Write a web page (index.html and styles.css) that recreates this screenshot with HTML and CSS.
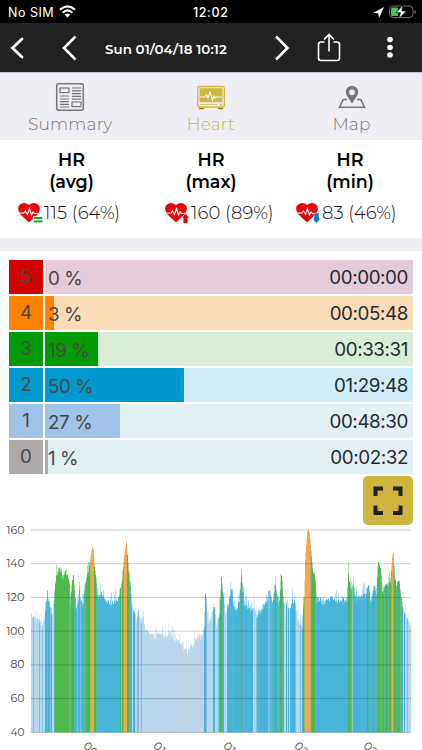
FILE: index.html
```html
<!DOCTYPE html>
<html lang="en">
<head>
<meta charset="utf-8">
<title>Heart rate</title>
<link rel="stylesheet" href="styles.css">
</head>
<body>
<div class="status">
  <span class="carrier">No SIM</span>
  <svg class="wifi" width="17" height="13" viewBox="0 0 17 13"><g fill="none" stroke="#fff" stroke-width="2.200"><path d="M1 4.600Q8.500-2 16 4.600"/><path d="M3.700 7.700Q8.500 3.200 13.300 7.700"/></g><path d="M5.700 9.600Q8.500 7.200 11.300 9.600L8.500 12.500z" fill="#fff"/></svg>
  <span class="clock">12:02</span>
  <svg class="battery" width="46" height="16" viewBox="0 0 46 16"><path d="M1 9L12 3 7 14 6.300 9.200z" fill="#fff"/><rect x="17.500" y="2" width="23.500" height="11.500" rx="3.500" fill="none" stroke="#777"/><path d="M19 5q0-1.500 1.500-1.500H26V12h-5.500Q19 12 19 10.500z" fill="#35c759"/><path d="M42.500 6v4q1.500-.5 1.500-2t-1.500-2z" fill="#777"/><path d="M31 1L24 8.700h4.500L26.500 15 34.500 7H29.800z" fill="#fff" stroke="#000" stroke-width=".7"/></svg>
</div>
<div class="nav">
  <svg class="back" width="15" height="24" viewBox="0 0 15 24"><path d="M13 3L3.500 12 13 21" fill="none" stroke="#fff" stroke-width="2.800" stroke-linecap="round"/></svg>
  <svg class="prev" width="17" height="28" viewBox="0 0 17 28"><path d="M14.500 2.500L3 14 14.500 25.500" fill="none" stroke="#fff" stroke-width="2.500"/></svg>
  <span class="date">Sun 01/04/18 10:12</span>
  <svg class="next" width="17" height="28" viewBox="0 0 17 28"><path d="M2 2.500L13.500 14 2 25.500" fill="none" stroke="#fff" stroke-width="2.500"/></svg>
  <svg class="share" width="24" height="30" viewBox="0 0 24 30"><path d="M7.500 9H4Q1.500 9 1.500 11.500V25Q1.500 27.500 4 27.500H20Q22.500 27.500 22.500 25V11.500Q22.500 9 20 9H16.500M12 18.500V2M7 6.500L12 1.500 17 6.500" fill="none" stroke="#fff" stroke-width="1.600"/></svg>
  <svg class="more" width="8" height="24" viewBox="0 0 8 24"><g fill="#fff"><circle cx="4" cy="3.500" r="2.800"/><circle cx="4" cy="11.500" r="2.800"/><circle cx="4" cy="19" r="2.800"/></g></svg>
</div>
<div class="tabs">
  <div class="tab"><svg width="30" height="30" viewBox="0 0 30 30"><g fill="none" stroke="#777" stroke-width="1.200"><rect x="1.700" y="1.700" width="26.600" height="26.600" rx="1.500" stroke-width="1.500"/><rect x="5" y="6" width="9" height="4.600"/><rect x="17" y="20" width="9" height="4.600"/><path d="M17 6h9M17 8.800h9M17 11.600h9M5 14h9M17 14.400h9M5 17h9M17 17.200h9M5 19.700h9M5 22.300h9M5 25h9"/></g></svg><span>Summary</span></div>
  <div class="tab active"><svg width="30" height="30" viewBox="0 0 30 30"><rect x="1.700" y="4.500" width="26.600" height="20.500" rx="1.500" fill="#efeef5" stroke="#d2b53e" stroke-width="1.300"/><rect x="3.500" y="6.200" width="23" height="14" fill="#d2b53e"/><path d="M4 15h5l1.500-2 1.500 3 2-6 2.500 8 1.500-4 1 2 1.500-1H26" fill="none" stroke="#fff" stroke-width="1.100"/><path d="M4 22.500h17M3 26h5v1H3zM22 26h5v1h-5z" stroke="#d2b53e" stroke-width=".8"/><circle cx="25" cy="22.500" r="1" fill="#d2b53e"/></svg><span>Heart</span></div>
  <div class="tab"><svg width="30" height="30" viewBox="0 0 30 30"><path d="M10 17.500H6.300L2.500 25.200H27.500L23.700 17.500H20" fill="none" stroke="#777" stroke-width="1.600"/><path fill-rule="evenodd" d="M15 21.500L10.300 14.300A6.300 6.300 0 1 1 19.700 14.300zM15 7.300a3 3 0 1 0 .01 0z" fill="#777"/></svg><span>Map</span></div>
</div>
<div class="stats">
  <div class="stat s1"><b>HR<br>(avg)</b><div><svg class="hr" width="25" height="22" viewBox="0 0 25 22"><path class="heart" d="M11 20.500L2 12Q-1.500 6 1.500 3Q6-1 11 3Q16-1 20.500 3Q23.500 6 20 12z"/><path class="pulse" d="M1 11h5l1.500-2 2 3.500 2-6 2 6.500 1.500-3 1.500 1.500H21"/><path d="M15 14h9.500v7.500H15z" fill="#fff"/><path d="M16 16h8.500M16 19.500h8.500" stroke="#22a12e" stroke-width="2"/></svg><span>115 (64%)</span></div></div>
  <div class="stat s2"><b>HR<br>(max)</b><div><svg class="hr" width="25" height="22" viewBox="0 0 25 22"><path class="heart" d="M11 20.500L2 12Q-1.500 6 1.500 3Q6-1 11 3Q16-1 20.500 3Q23.500 6 20 12z"/><path class="pulse" d="M1 11h5l1.500-2 2 3.500 2-6 2 6.500 1.500-3 1.500 1.500H21"/><path d="M20.500 11L24.500 16H22.900V21.500H18.100V16H16.500z" fill="#e9000b" stroke="#fff" stroke-width=".7"/></svg><span>160 (89%)</span></div></div>
  <div class="stat s3"><b>HR<br>(min)</b><div><svg class="hr" width="25" height="22" viewBox="0 0 25 22"><path class="heart" d="M11 20.500L2 12Q-1.500 6 1.500 3Q6-1 11 3Q16-1 20.500 3Q23.500 6 20 12z"/><path class="pulse" d="M1 11h5l1.500-2 2 3.500 2-6 2 6.500 1.500-3 1.500 1.500H21"/><path d="M20.500 21.500L24.500 16.500H23V11H18V16.500H16.500z" fill="#0875c9" stroke="#fff" stroke-width=".5"/></svg><span>83 (46%)</span></div></div>
</div>
<div class="strip"></div>
<div class="zones">
  <div class="zone z5"><i>5</i><div class="track"><div class="fill"></div><span>0 %</span><em>00:00:00</em></div></div>
  <div class="zone z4"><i>4</i><div class="track"><div class="fill"></div><span>3 %</span><em>00:05:48</em></div></div>
  <div class="zone z3"><i>3</i><div class="track"><div class="fill"></div><span>19 %</span><em>00:33:31</em></div></div>
  <div class="zone z2"><i>2</i><div class="track"><div class="fill"></div><span>50 %</span><em>01:29:48</em></div></div>
  <div class="zone z1"><i>1</i><div class="track"><div class="fill"></div><span>27 %</span><em>00:48:30</em></div></div>
  <div class="zone z0"><i>0</i><div class="track"><div class="fill"></div><span>1 %</span><em>00:02:32</em></div></div>
</div>
<div class="expand"><svg width="50" height="49" viewBox="0 0 50 49"><path d="M20 12.500H12.500V20M30 12.500H37.500V20M20 37H12.500V29.500M30 37H37.500V29.500" fill="none" stroke="#222" stroke-width="4"/></svg></div>
<svg class="chart" id="chart" width="422" height="225" viewBox="0 525 422 225"></svg>
<script src="chart.js"></script>
</body>
</html>
```
FILE: styles.css
```css
* { box-sizing: border-box; }
body { margin: 0; width: 422px; height: 750px; overflow: hidden; background: #fff; font-family: Montserrat, sans-serif; color: #111; }
svg { display: block; flex: none; }
.status { height: 23px; background: #000; color: #fff; display: flex; align-items: center; padding-left: 8px; font: 400 12.500px/23px Inter, sans-serif; }
.carrier { width: 51px; letter-spacing: .5px; white-space: nowrap; padding-top: 1px; }
.clock { margin-left: 117px; width: 43px; font-weight: 500; letter-spacing: .6px; padding-top: 1px; }
.battery { margin-left: 136px; }
.nav { height: 49px; background: #222; color: #fff; display: flex; align-items: center; padding-left: 9px; }
.prev { margin-left: 37px; }
.date { margin-left: 27px; width: 123px; font-size: 13.400px; font-weight: 600; letter-spacing: .05px; white-space: nowrap; padding-top: 2px; }
.next { margin-left: 46px; }
.share { margin-left: 26px; }
.more { margin-left: 45px; }
.tabs { height: 68px; background: #efeef5; border-top: 1px solid #c8c5ce; display: grid; grid-template-columns: 140.500px 140.500px 141px; }
.tab { display: flex; flex-direction: column; align-items: center; padding-top: 9px; font-size: 17px; line-height: 22px; font-weight: 300; color: #777; }
.tab span { letter-spacing: .15px; margin-top: 1px; }
.tab.active { color: #d2b53e; }
.stats { height: 98px; display: flex; padding: 9px 0 0; }
.stat { width: 139px; text-align: center; }
.stat b { display: block; font-weight: 600; font-size: 17.500px; line-height: 22px; color: #000; }
.stat > div { display: flex; align-items: center; margin-top: 8px; height: 23px; font-size: 18px; font-weight: 300; letter-spacing: .1px; white-space: nowrap; }
.s1 { padding-left: 4px; }
.s1 > div { margin-left: 14px; }
.s2 > b, .s3 > b { padding-left: 5px; }
.s2 > div { margin-left: 26px; }
.s3 > div { margin-left: 18px; }
.hr { margin-right: 1px; }
.heart { fill: #f0000b; }
.pulse { fill: none; stroke: #fff; stroke-width: 1.100; }
.strip { height: 13px; background: #efeef5; }
.zones { padding: 9px 9px 0; display: grid; gap: 2px; font-family: Inter, sans-serif; font-size: 18.800px; line-height: 35px; color: #484848; }
.zone { display: grid; grid-template: 34px / 34px 368px; gap: 2px; }
.zone i { font-style: normal; text-align: center; background: var(--c); line-height: 34px; }
.track { background: var(--bg); display: grid; grid-template: 34px / 1fr 1fr; letter-spacing: -.4px; }
.track > * { grid-row: 1; }
.fill { grid-column: 1 / 3; width: var(--w); background: var(--c); }
.track span { grid-column: 1; padding: 1px 0 0 3px; }
.track em { grid-column: 2; text-align: right; padding-right: 5px; font-style: normal; color: #252b30; }
.z5 { --c: #d10003; --bg: #e4cbd9; --w: 0; }
.z4 { --c: #ff8202; --bg: #fbdbb5; --w: 9px; }
.z3 { --c: #039b04; --bg: #daedd8; --w: 53px; }
.z2 { --c: #0099ce; --bg: #d0ecf5; --w: 139px; }
.z1 { --c: #9fc3e7; --bg: #e4eff5; --w: 75px; }
.z0 { --c: #aea9a9; --bg: #e4eff5; --w: 3px; }
.expand { width: 50px; height: 49px; margin: 2px 0 0 363px; background: #cfb53f; border-radius: 5px; }
.chart text { font-family: Montserrat, sans-serif; font-size: 11.500px; fill: #444; }
```
FILE: chart.js
```js
const NS = 'http://www.w3.org/2000/svg';
const chart = document.getElementById('chart');
function add(tag, attrs, text) {
  const el = document.createElementNS(NS, tag);
  for (const k in attrs) el.setAttribute(k, attrs[k]);
  if (text) el.textContent = text;
  chart.appendChild(el);
}
// Envelope of the trace: x, y pairs.
const pts = [31,616,33,617,35,619,39,619,42,626,44,618,46,604,47,592,48,602,50,607,52,617,53,610,54,598,55,580,57,573,59,569,61,574,63,577,65,572,67,575,69,585,70,600,72,580,73,575,74,590,76,610,79,592,80,597,82,608,84,592,86,578,88,571,90,560,92,547,93,550,94,567,96,580,97,596,99,597,101,594,105,600,110,603,115,602,118,598,120,590,122,579,124,555,126,542,127,555,128,570,130,585,131,605,134,610,136,622,138,610,140,620,143,618,145,630,150,635,155,636,160,632,165,637,170,632,173,641,178,640,183,650,188,651,193,643,198,635,202,638,204,625,205,592,206,600,207,625,210,618,213,612,214,608,216,625,219,615,221,578,222,590,225,615,228,605,231,590,233,605,236,612,239,600,241,577,242,590,244,602,250,610,253,605,256,615,260,610,263,605,266,603,269,588,271,602,273,600,275,582,276,594,279,603,281,577,283,600,285,612,287,597,289,615,292,600,294,602,296,612,299,623,302,625,303,605,304,595,305,560,307,532,308,530,309,534,310,545,312,568,313,570,314,575,315,585,316,600,319,598,322,602,326,602,331,595,335,602,341,600,347,599,348,575,350,588,353,588,356,600,360,595,365,596,368,582,370,605,374,582,376,596,378,562,380,570,382,592,386,584,390,583,392,558,393,553,394,578,396,585,398,580,400,590,402,608,404,615,406,618,409,623,411,628];
const L = '#b6d7ef', M = '#80c3df', B = '#4bb5da', G = '#4eb84c', T = '#59bb95', O = '#f9a550', P = '#bbd5ee', Y = '#c8d0d8';
// Colour of each run, with the x where the run ends.
const runs = [[33,L],[34,M],[39,L],[40,M],[42,L],[43,M],[45,L],[50,B],[51,M],[52,B],[54,L],[55,T],[69,G],[71,T],[74,G],[75,T],[77,B],[78,M],[80,B],[81,M],[84,B],[86,T],[90,G],[91,'#b8b453'],[94,O],[96,G],[97,T],[120,B],[121,G],[122,M],[123.5,G],[127,O],[129,G],[130,T],[132,B],[133,P],[135,B],[137,P],[139,M],[141,P],[142,M],[177,P],[178,Y],[182,P],[183,Y],[185,P],[186,Y],[188,P],[189,Y],[193,P],[194,Y],[204,P],[206,B],[207,M],[213,L],[215,B],[218,L],[219,M],[220,B],[222,G],[224,B],[227,L],[239,B],[241,T],[242,G],[253,B],[256,L],[257,M],[268,B],[270,M],[274,B],[275,T],[276,G],[280,B],[282,G],[284,T],[286,P],[287,B],[288,P],[289,B],[290,L],[295,B],[296,M],[300,L],[301,M],[302,L],[303,B],[304.5,G],[310.5,O],[311.5,T],[315,G],[316,T],[348,B],[350,G],[352,T],[353,'#8acda6'],[354,T],[367,B],[368.5,G],[373,B],[374,G],[376,B],[377,T],[380.5,G],[382,T],[384,G],[385,T],[388,G],[389,T],[391.5,G],[393.5,O],[396,G],[397,T],[400,G],[401,T],[403,B],[404,P],[405,B],[407,P],[408,M],[412,P]];
let seed = 29;
const rnd = () => (seed = (seed * 16807) % 2147483647) / 2147483647;
let p = 0, r = 0;
for (let x = 31; x < 411; x += 0.5) {
  while (p + 4 < pts.length && pts[p + 2] <= x) p += 2;
  while (runs[r][0] <= x) r++;
  const t = (x - pts[p]) / (pts[p + 2] - pts[p]);
  const smooth = pts[p + 1] + (pts[p + 3] - pts[p + 1]) * t;
  const calm = smooth < 568;
  const y = smooth + (calm ? 0 : (rnd() - 0.35) * 6);
  const color = runs[r][1];
  const width = Math.min(1, 411 - x);
  add('rect', {x, y, width, height: 732.3 - y, fill: color});
  if (!calm && rnd() < 0.23) {
    const h = rnd() * 13;
    add('rect', {x, y: y - h, width: 0.6, height: h, fill: color, opacity: 0.75});
  }
  if (color === B && rnd() < 0.04 && (x < 97 || (x > 207 && x < 303))) add('rect', {x, y, width: 0.5, height: 732.3 - y, fill: '#9dd4ea', opacity: 0.5});
}
for (let v = 160; v >= 40; v -= 20) {
  const y = 530 + (160 - v) * 1.686;
  add('rect', {x: 30.5, y: y - 0.5, width: 380.5, height: 1, fill: '#203040', opacity: 0.24});
  const w = v > 99 ? 18 : 14;
  add('text', {x: 24.5 - w, y: y + 3.5, textLength: w, lengthAdjust: 'spacingAndGlyphs'}, String(v));
}
[[84, '00'], [154, '01'], [224, '01'], [295, '02'], [364, '02']].forEach(([x, s]) =>
  add('text', {transform: `translate(${x - 1.5} 746.5) rotate(45)`}, s));
```
